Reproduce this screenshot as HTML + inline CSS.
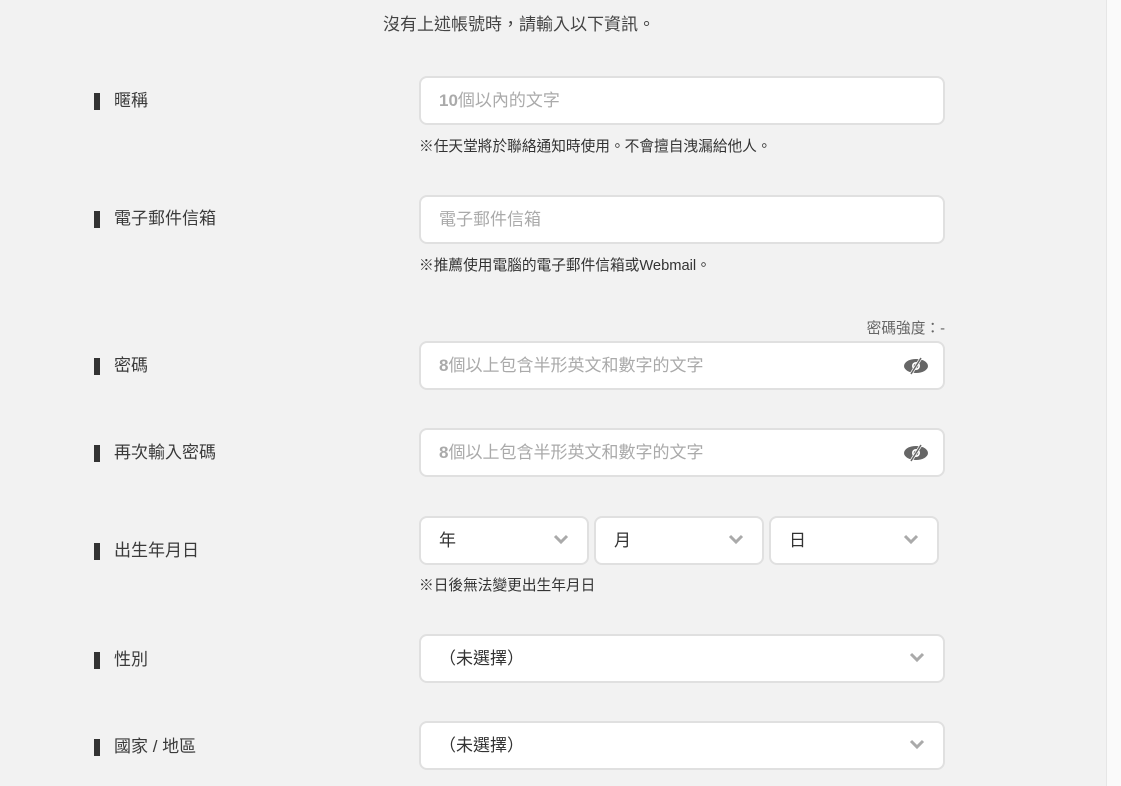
<!DOCTYPE html>
<html><head><meta charset="utf-8"><style>
body{margin:0;width:1121px;height:786px;background:#f2f2f2;font-family:"Liberation Sans","Noto Sans CJK TC",sans-serif;color:#333;position:relative;overflow:hidden}
.r{position:absolute;right:0;top:0;width:14px;height:786px;background:#fafafa;border-left:1px solid #e6e6e6}
.t{position:absolute;left:0;width:1038px;text-align:center;top:10px;font-size:17px;color:#444}
.l{position:absolute;left:94px;font-size:17px;color:#3a3a3a;line-height:20px}
.l:before{content:"";position:absolute;left:0;top:2px;width:6px;height:17px;background:#333}
.l span{margin-left:20px}
.i{position:absolute;background:#fff;border:2px solid #e0e0e0;border-radius:8px;box-sizing:border-box;height:49px;font-size:17px;color:#aaa;padding-left:18px;line-height:45px}
.i b{font-weight:bold}
.d{color:#333}
.n{position:absolute;left:419px;font-size:14.7px;color:#333}
.ch{position:absolute;right:18px;top:15px}
.eye{position:absolute;right:14px;top:14px}
</style></head><body>
<div class="r"></div>
<div class="t">沒有上述帳號時，請輸入以下資訊。</div>

<div class="l" style="top:91px"><span>暱稱</span></div>
<div class="i" style="left:419px;top:76px;width:526px"><b>10</b>個以內的文字</div>
<div class="n" style="top:135px">※任天堂將於聯絡通知時使用。不會擅自洩漏給他人。</div>

<div class="l" style="top:209px"><span>電子郵件信箱</span></div>
<div class="i" style="left:419px;top:195px;width:526px">電子郵件信箱</div>
<div class="n" style="top:254px">※推薦使用電腦的電子郵件信箱或Webmail。</div>

<div class="n" style="top:317px;left:auto;right:176px;color:#666">密碼強度：-</div>
<div class="l" style="top:356px"><span>密碼</span></div>
<div class="i" style="left:419px;top:341px;width:526px"><b>8</b>個以上包含半形英文和數字的文字<svg class="eye" width="26" height="18" viewBox="0 0 26 18"><ellipse cx="13" cy="9" rx="12" ry="7" fill="#666"/><circle cx="13" cy="9" r="4" fill="#fff"/><circle cx="13" cy="9" r="2.3" fill="#666"/><line x1="18" y1="1" x2="8" y2="17" stroke="#fff" stroke-width="3"/><line x1="18" y1="1" x2="8" y2="17" stroke="#666" stroke-width="1.5"/></svg></div>

<div class="l" style="top:443px"><span>再次輸入密碼</span></div>
<div class="i" style="left:419px;top:428px;width:526px"><b>8</b>個以上包含半形英文和數字的文字<svg class="eye" width="26" height="18" viewBox="0 0 26 18"><ellipse cx="13" cy="9" rx="12" ry="7" fill="#666"/><circle cx="13" cy="9" r="4" fill="#fff"/><circle cx="13" cy="9" r="2.3" fill="#666"/><line x1="18" y1="1" x2="8" y2="17" stroke="#fff" stroke-width="3"/><line x1="18" y1="1" x2="8" y2="17" stroke="#666" stroke-width="1.5"/></svg></div>

<div class="l" style="top:541px"><span>出生年月日</span></div>
<div class="i d" style="left:419px;top:516px;width:170px">年<svg class="ch" width="16" height="12" viewBox="0 0 16 12"><path d="M2 3l6 6 6-6" stroke="#aaa" stroke-width="3" fill="none"/></svg></div>
<div class="i d" style="left:594px;top:516px;width:170px">月<svg class="ch" width="16" height="12" viewBox="0 0 16 12"><path d="M2 3l6 6 6-6" stroke="#aaa" stroke-width="3" fill="none"/></svg></div>
<div class="i d" style="left:769px;top:516px;width:170px">日<svg class="ch" width="16" height="12" viewBox="0 0 16 12"><path d="M2 3l6 6 6-6" stroke="#aaa" stroke-width="3" fill="none"/></svg></div>
<div class="n" style="top:574px">※日後無法變更出生年月日</div>

<div class="l" style="top:650px"><span>性別</span></div>
<div class="i d" style="left:419px;top:634px;width:526px">（未選擇）<svg class="ch" width="16" height="12" viewBox="0 0 16 12"><path d="M2 3l6 6 6-6" stroke="#aaa" stroke-width="3" fill="none"/></svg></div>

<div class="l" style="top:737px"><span>國家 / 地區</span></div>
<div class="i d" style="left:419px;top:721px;width:526px">（未選擇）<svg class="ch" width="16" height="12" viewBox="0 0 16 12"><path d="M2 3l6 6 6-6" stroke="#aaa" stroke-width="3" fill="none"/></svg></div>
</body></html>
